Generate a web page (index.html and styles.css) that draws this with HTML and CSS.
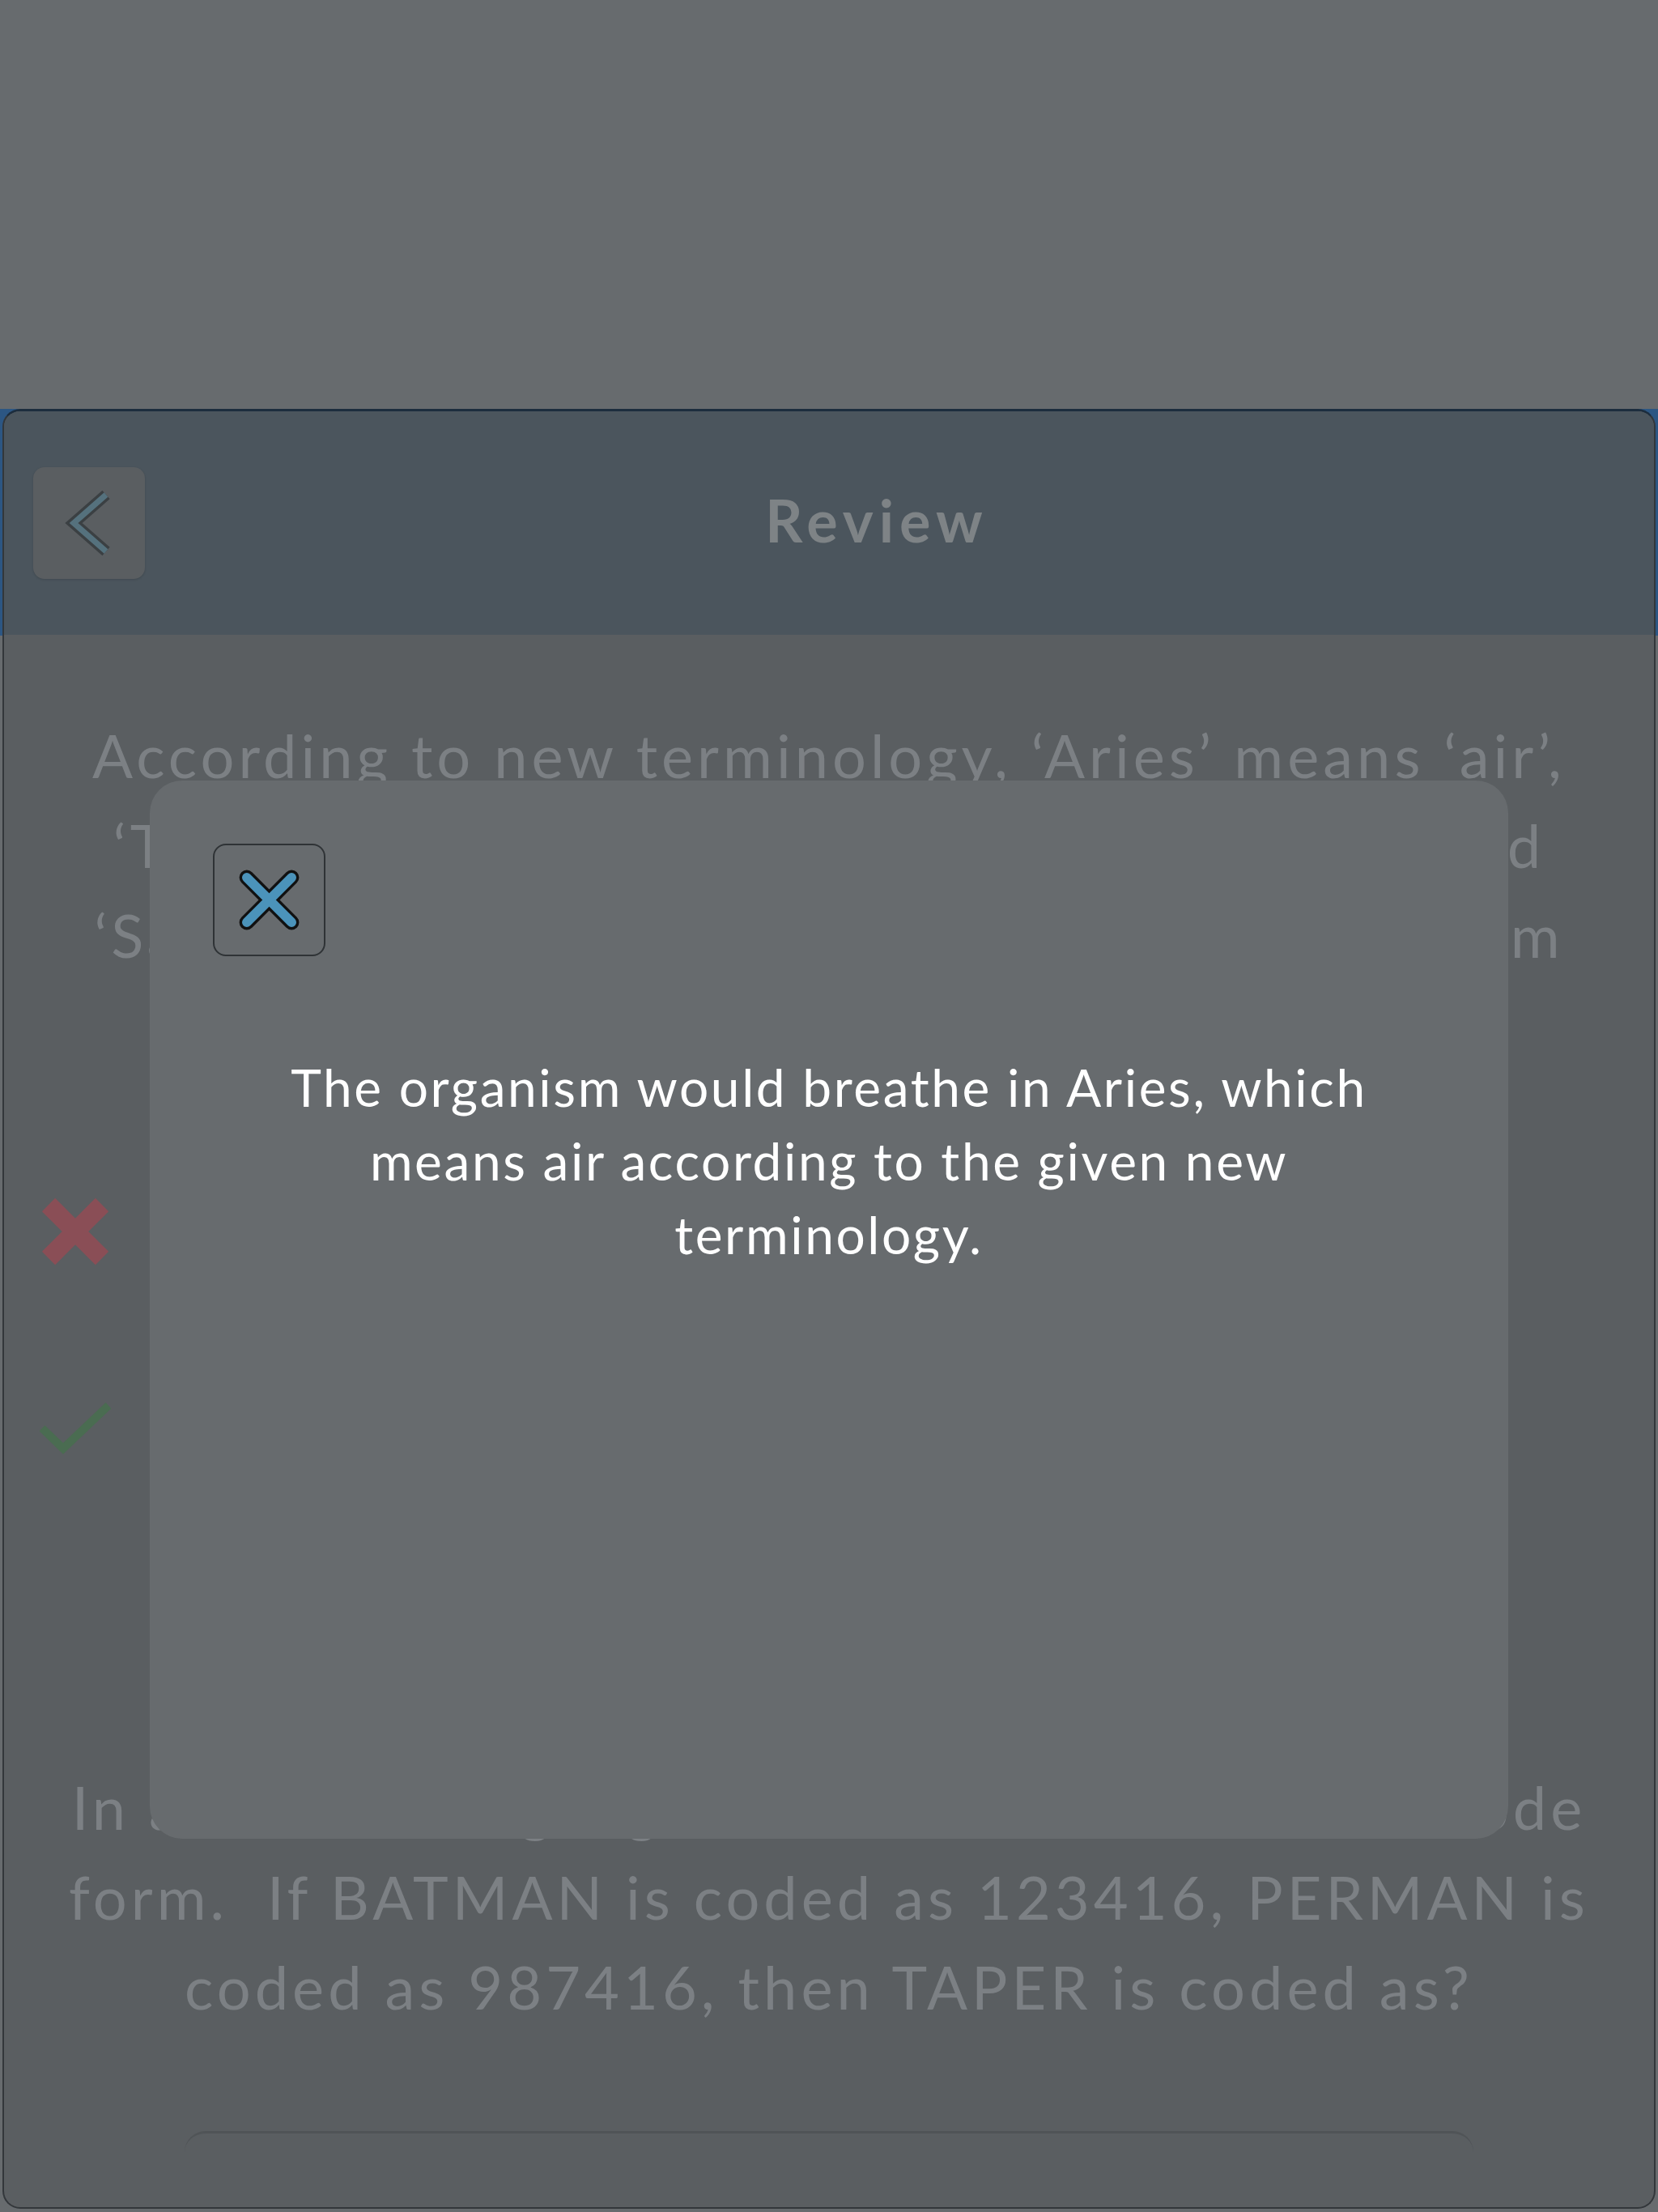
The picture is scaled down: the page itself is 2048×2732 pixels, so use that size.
FILE: index.html
```html
<!DOCTYPE html>
<html lang="en">

<head>
    <meta charset="UTF-8">
    <meta name="viewport" content="width=device-width, initial-scale=1.0">
    <title>Review</title>
    <link rel="stylesheet" href="styles.css">
</head>

<body>
    <div class="top-space"></div>

    <!-- Karta z przeglądem odpowiedzi -->
    <div class="review-wrap">
        <div class="review-card">
            <div class="review-header">
                <button class="back-btn" aria-label="Back">
                    <svg viewBox="0 0 138 138" width="138" height="138">
                        <polyline points="90,34 50,69 90,104" fill="none" stroke="#3b4043" stroke-width="14" stroke-linejoin="miter"/>
                        <polyline points="90,34 50,69 90,104" fill="none" stroke="#55717d" stroke-width="7" stroke-linejoin="miter"/>
                    </svg>
                </button>
                <h1 class="review-title">Review</h1>
            </div>

            <div class="review-body">
                <div class="question">
                    <p class="question-text">According to new terminology, ‘Aries’ means ‘air’, ‘Taurus’ means ‘water’, ‘Gemini’ means ‘fire’ and ‘Sagittarius’ means ‘earth’. What will an organism breathe in?</p>
                    <div class="option">
                        <span class="option-icon">
                            <svg viewBox="0 0 88 88" width="88" height="88">
                                <line x1="11" y1="11" x2="77" y2="77" stroke="#8a4e56" stroke-width="23"/>
                                <line x1="77" y1="11" x2="11" y2="77" stroke="#8a4e56" stroke-width="23"/>
                            </svg>
                        </span>
                        <span class="option-text">Taurus</span>
                    </div>
                    <div class="option">
                        <span class="option-icon">
                            <svg viewBox="0 0 88 88" width="88" height="88">
                                <polyline points="3,32 29,57 85,4" fill="none" stroke="#4a6c51" stroke-width="10"/>
                            </svg>
                        </span>
                        <span class="option-text">Aries</span>
                    </div>
                    <div class="option">
                        <span class="option-icon"></span>
                        <span class="option-text">Gemini</span>
                    </div>
                </div>

                <div class="question">
                    <p class="question-text">In a certain language, each word is written in code form.&nbsp; If BATMAN is coded as 123416, PERMAN is coded as 987416, then TAPER is coded as?</p>
                    <div class="answer-box"></div>
                </div>
            </div>
        </div>
    </div>

    <!-- Okno z wyjaśnieniem -->
    <div class="overlay">
        <div class="modal">
            <button class="close-btn" aria-label="Close">
                <svg viewBox="0 0 139 139" width="139" height="139">
                    <line x1="41" y1="41" x2="98" y2="98" stroke="#111" stroke-width="19" stroke-linecap="round"/>
                    <line x1="98" y1="41" x2="41" y2="98" stroke="#111" stroke-width="19" stroke-linecap="round"/>
                    <line x1="41" y1="41" x2="98" y2="98" stroke="#4b93ba" stroke-width="12" stroke-linecap="round"/>
                    <line x1="98" y1="41" x2="41" y2="98" stroke="#4b93ba" stroke-width="12" stroke-linecap="round"/>
                </svg>
            </button>
            <p class="modal-text">The organism would breathe in Aries, which means air according to the given new terminology.</p>
        </div>
    </div>
</body>

</html>
```

FILE: styles.css
```css
/* Cała strona */
body {
    margin: 0;
    padding: 0;
    background-color: #676b6e;
    font-family: Lato, "Open Sans", "Noto Sans", sans-serif;
}

.top-space {
    height: 505px;
}

/* Niebieski pasek za nagłówkiem */
.review-wrap {
    background: linear-gradient(#2c5683 0, #2c5683 280px, transparent 280px);
}

.review-card {
    margin: 0 3px;
    height: 2218px;
    border: 2px solid #33373b;
    border-top: 3px solid #1c2d3e;
    border-radius: 22px;
    overflow: hidden;
    background-color: #5a5e61;
    display: flex;
    flex-direction: column;
}

/* Nagłówek */
.review-header {
    height: 276px;
    flex-shrink: 0;
    display: flex;
    align-items: center;
    padding: 0 36px;
    background-color: #4b555d;
}

.back-btn {
    width: 138px;
    height: 138px;
    padding: 0;
    border: none;
    border-radius: 14px;
    background-color: #5a5e61;
    box-shadow: 0 1px 3px rgba(0, 0, 0, 0.15);
    display: flex;
    align-items: center;
    justify-content: center;
}

.review-title {
    flex: 1;
    margin: -8px 20px 0 0;
    text-align: center;
    font-size: 72px;
    font-weight: 700;
    letter-spacing: 7px;
    color: #7e8386;
}

/* Pytania */
.review-body {
    padding: 93px 50px 0;
}

.question-text {
    margin: 0;
    text-align: center;
    font-size: 74px;
    letter-spacing: 5px;
    line-height: 111px;
    color: #7c8084;
}

.option {
    display: flex;
    align-items: center;
    height: 180px;
    margin-top: 75px;
    margin-left: -6px;
}

.option:first-of-type {
    margin-top: 110px;
}

.option-icon {
    width: 88px;
    height: 88px;
    flex-shrink: 0;
}

.option-text {
    margin-left: 120px;
    font-size: 62px;
    color: #7c8084;
}

.question + .question {
    margin-top: 55px;
}

.answer-box {
    margin: 123px 173px 0;
    height: 200px;
    border-top: 3px solid #505457;
    border-radius: 26px 26px 0 0;
    background-color: #5a5e61;
}

/* Okno modalne */
.overlay {
    position: fixed;
    top: 0;
    left: 0;
    right: 0;
    bottom: 0;
    display: flex;
    justify-content: center;
    align-items: flex-start;
    padding-top: 964px;
}

.modal {
    width: 1678px;
    height: 1307px;
    box-sizing: border-box;
    padding: 78px;
    border-radius: 40px;
    background-color: #676b6e;
}

.close-btn {
    width: 139px;
    height: 139px;
    padding: 0;
    border: 2px solid #2f3336;
    border-radius: 16px;
    background-color: #676b6e;
    display: flex;
    align-items: center;
    justify-content: center;
}

.modal-text {
    margin: 116px 0 0;
    padding: 0 40px;
    text-align: center;
    font-size: 64px;
    letter-spacing: 2.6px;
    line-height: 91px;
    color: #ffffff;
}
```
